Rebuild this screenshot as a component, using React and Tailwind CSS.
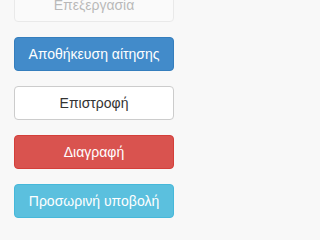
const buttons = [
  { label: 'Επεξεργασία', cls: 'bg-white border-[#cccccc] text-[#333333] opacity-[0.32]' },
  { label: 'Αποθήκευση αίτησης', cls: 'bg-[#428bca] border-[#357ebd] text-white' },
  { label: 'Επιστροφή', cls: 'bg-white border-[#cccccc] text-[#333333]' },
  { label: 'Διαγραφή', cls: 'bg-[#d9534f] border-[#d43f3a] text-white' },
  { label: 'Προσωρινή υποβολή', cls: 'bg-[#5bc0de] border-[#46b8da] text-white' },
];

export default function App() {
  return (
    <div className="w-full min-h-screen overflow-hidden bg-[#f8f8f8] font-['Liberation_Sans',Arial,sans-serif]">
      <div className="flex flex-col gap-[15px] pl-[14px] -mt-[12px]">
        {buttons.map((b) => (
          <button
            key={b.label}
            type="button"
            className={`w-[160px] h-[34px] border rounded-[4px] text-[14px] leading-[20px] text-center ${b.cls}`}
          >
            {b.label}
          </button>
        ))}
      </div>
    </div>
  );
}
